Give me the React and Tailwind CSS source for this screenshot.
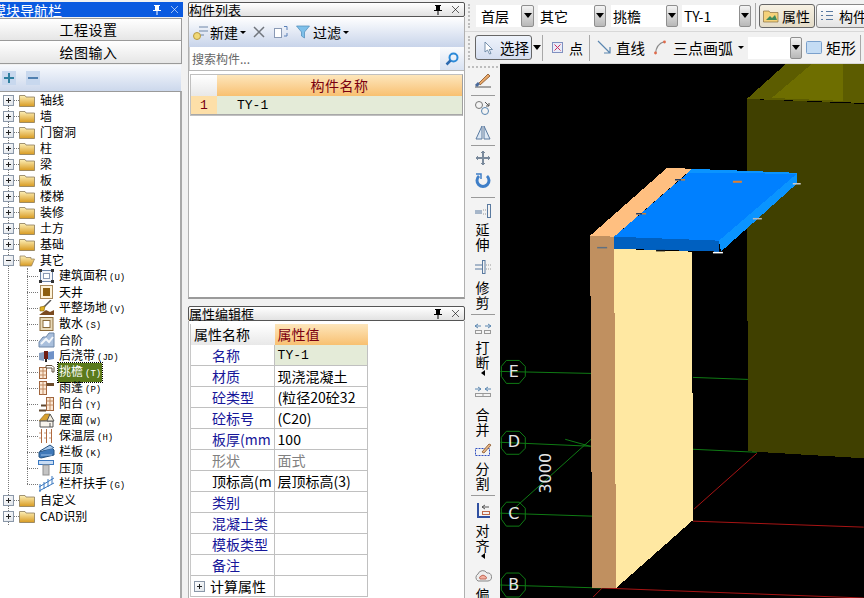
// App.jsx - 构件绘图界面
import React from 'react';

const Glyph = ({ name }) => {
    switch (name) {
        case 'area':
            return (<svg width="17" height="16" viewBox="0 0 17 16"><rect x="2.5" y="2.5" width="12" height="11" fill="#f4f6fa" stroke="#6f86a8" /><rect x="5.5" y="5.5" width="6" height="5" fill="#fff" stroke="#8a9ab5" /><rect x="1" y="1" width="3" height="3" fill="#333" /><rect x="13" y="1" width="3" height="3" fill="#333" /><rect x="1" y="12" width="3" height="3" fill="#333" /><rect x="13" y="12" width="3" height="3" fill="#333" /></svg>);
        case 'well':
            return (<svg width="17" height="16" viewBox="0 0 17 16"><rect x="2.5" y="1.5" width="12" height="13" fill="#fdf2d8" stroke="#a8895a" /><rect x="5" y="4" width="7" height="8" fill="#8c5f10" /></svg>);
        case 'site':
            return (<svg width="17" height="16" viewBox="0 0 17 16"><path d="M1 15 L8 10 L12 12 L16 10 L16 15 Z" fill="#7a4a20" /><path d="M5 8 L13 0" stroke="#555" strokeWidth="1.5" /><path d="M2 7 L7 6 L6 11 L2 11 Z" fill="#e0b020" stroke="#806010" strokeWidth="0.6" /></svg>);
        case 'apron':
            return (<svg width="17" height="16" viewBox="0 0 17 16"><rect x="2" y="1.5" width="13" height="13" fill="#e8d9b8" stroke="#8a6a3a" /><rect x="5" y="4.5" width="7" height="7" fill="#fff" stroke="#8a6a3a" /></svg>);
        case 'step':
            return (<svg width="17" height="16" viewBox="0 0 17 16"><path d="M1 10 L5 5 L8 5 L11 1 L16 1 L16 15 L1 15 Z" fill="#a9bfdc" stroke="#6f88aa" /><path d="M3 12 L8 7 L11 10 L15 5" fill="none" stroke="#f4f7fb" strokeWidth="2" /></svg>);
        case 'band':
            return (<svg width="17" height="16" viewBox="0 0 17 16"><path d="M1 5 L6 4 L6 13 L1 12 Z" fill="#8aa0c0" /><path d="M10 4 L16 3 L16 11 L10 12 Z" fill="#6f92c8" /><rect x="6" y="3" width="4" height="8" fill="#701c10" /><rect x="7" y="11" width="2" height="3" fill="#222" /></svg>);
        case 'eave':
            return (<svg width="17" height="16" viewBox="0 0 17 16"><rect x="1.5" y="3.5" width="7" height="11" fill="#fbe9d6" stroke="#a0643c" /><path d="M1.5 7 H8.5 M1.5 11 H8.5 M5 3.5 V14.5" stroke="#c08a60" /><path d="M8 1.5 H14 L16 3.5 V8 H14 V4 H8 Z" fill="#fff" stroke="#60503c" /></svg>);
        case 'canopy':
            return (<svg width="17" height="16" viewBox="0 0 17 16"><rect x="1.5" y="1.5" width="7" height="13" fill="#fbe9d6" stroke="#a0643c" /><path d="M1.5 5 H8.5 M1.5 9 H8.5 M5 1.5 V14.5" stroke="#c08a60" /><rect x="8.5" y="3" width="7.5" height="3" fill="#6a4a2a" /></svg>);
        case 'balcony':
            return (<svg width="17" height="16" viewBox="0 0 17 16"><rect x="8.5" y="1.5" width="7" height="13" fill="#fbe9d6" stroke="#a0643c" /><path d="M8.5 5 H15.5 M8.5 9 H15.5 M12 1.5 V14.5" stroke="#c08a60" /><path d="M1 14.5 H8 M3 9.5 H8" stroke="#604830" strokeWidth="2" /></svg>);
        case 'roof':
            return (<svg width="17" height="16" viewBox="0 0 17 16"><path d="M1 9 L7 2 L12 2 L12 8 Z" fill="#d8a030" stroke="#7a5a20" strokeWidth="0.6" /><path d="M2 9 H15 V15 H2 Z" fill="#f8f4ec" stroke="#555" /><path d="M12 2 L16 9 H9 Z" fill="#f4eee0" stroke="#555" /><path d="M12 11 V15" stroke="#555" /></svg>);
        case 'insul':
            return (<svg width="17" height="16" viewBox="0 0 17 16"><path d="M3.5 1 V15 M8.5 1 V15 M13.5 1 V15" stroke="#b06a40" /><path d="M1 5 H16 M1 10 H16" stroke="#c49a7c" strokeDasharray="2 3" /></svg>);
        case 'fence':
            return (<svg width="17" height="16" viewBox="0 0 17 16"><path d="M1 8 L14 4 L16 6 L16 11 L3 14 L1 13 Z" fill="#3e78b8" stroke="#23507e" /><path d="M2 7 L12 1 L16 4" fill="#a8c8ec" stroke="#23507e" /><path d="M3 11 H14" stroke="#9cc0e8" /></svg>);
        case 'coping':
            return (<svg width="17" height="16" viewBox="0 0 17 16"><rect x="0.5" y="0.5" width="15" height="4" fill="#c8dcf4" stroke="#3a78c0" /><rect x="5" y="5" width="6" height="10" fill="#c4c4c4" stroke="#909090" /></svg>);
        case 'rail':
            return (<svg width="17" height="16" viewBox="0 0 17 16"><path d="M1 11 L16 2 M1 15 L16 7 M2 8 V16 M6 6 V13 M10 3 V11 M14 0 V8" stroke="#3a78c0" fill="none" /></svg>);
        default:
            return null;
    }
};

const Expander = ({ open }) => (
    <span className="relative block w-[11px] h-[11px] border border-[#8a97a8] bg-gradient-to-br from-white to-[#dfe4ea] shrink-0">
        <span className="absolute left-[2px] top-[4px] w-[5px] h-px bg-[#222]" />
        {!open && <span className="absolute left-[4px] top-[2px] w-px h-[5px] bg-[#222]" />}
    </span>
);

const Folder = ({ open }) => (
    <svg width="16" height="13" viewBox="0 0 16 13" className="shrink-0">
        <defs>
            <linearGradient id="fold" x1="0" y1="0" x2="0" y2="1"><stop offset="0" stopColor="#fdf0b8" /><stop offset="1" stopColor="#d89a20" /></linearGradient>
        </defs>
        {open ? (
            <path d="M1 12 L1 2 H6 L7 3.5 H12 V5 H15.5 L12.5 12 Z" fill="url(#fold)" stroke="#9a8660" strokeWidth="0.8" />
        ) : (
            <path d="M0.5 12.5 V1.5 H6 L7 3 H15.5 V12.5 Z" fill="url(#fold)" stroke="#8a7a58" strokeWidth="0.8" />
        )}
    </svg>
);

const groupsTop = ['轴线', '墙', '门窗洞', '柱', '梁', '板', '楼梯', '装修', '土方', '基础'];

const children = [
    { icon: 'area', name: '建筑面积', key: '(U)' },
    { icon: 'well', name: '天井', key: '' },
    { icon: 'site', name: '平整场地', key: '(V)' },
    { icon: 'apron', name: '散水', key: '(S)' },
    { icon: 'step', name: '台阶', key: '' },
    { icon: 'band', name: '后浇带', key: '(JD)' },
    { icon: 'eave', name: '挑檐', key: '(T)', active: true },
    { icon: 'canopy', name: '雨蓬', key: '(P)' },
    { icon: 'balcony', name: '阳台', key: '(Y)' },
    { icon: 'roof', name: '屋面', key: '(W)' },
    { icon: 'insul', name: '保温层', key: '(H)' },
    { icon: 'fence', name: '栏板', key: '(K)' },
    { icon: 'coping', name: '压顶', key: '' },
    { icon: 'rail', name: '栏杆扶手', key: '(G)' },
];

const GroupRow = ({ label, open }) => (
    <div className="relative flex items-center h-4 pl-[3px]">
        <Expander open={open} />
        <span className="w-[5px] border-t border-dotted border-[#777] shrink-0" />
        <Folder open={open} />
        <span className="ml-[5px] text-[12px] leading-4 text-black">{label}</span>
    </div>
);

const ChildRow = ({ item }) => (
    <div className="flex items-center h-4 pl-[27px]">
        <span className="w-[11px] border-t border-dotted border-[#777] shrink-0" />
        <span className="w-[17px] h-4 shrink-0"><Glyph name={item.icon} /></span>
        <span className={`ml-[3px] pl-[1px] pr-[1px] text-[12px] leading-4 whitespace-nowrap ${item.active ? 'bg-[#5b7a1c] text-white outline-1 outline-dotted outline-black' : 'text-black'}`}>
            {item.name}
            {item.key && <span className="font-['Liberation_Mono',monospace] text-[9px] ml-[2px]">{item.key}</span>}
        </span>
    </div>
);

const PanelTitle = ({ title }) => (
    <div className="flex items-center h-[15px] border border-[#555] rounded-[2px] bg-gradient-to-b from-white to-[#e2e2e2]">
        <span className="text-[13px] leading-[13px] text-black flex-1">{title}</span>
        <PinClose dark />
    </div>
);

const PinClose = ({ dark }) => (
    <span className={`flex items-center gap-[9px] pr-[4px] ${dark ? 'text-black' : 'text-white'}`}>
        <svg width="8" height="10" viewBox="0 0 8 10" fill="currentColor"><path d="M1 0 H7 V1 H6 V5 H8 V6 H4.5 V10 H3.5 V6 H0 V5 H2 V1 H1 Z" /></svg>
        <svg width="9" height="9" viewBox="0 0 9 9" fill="none" stroke="currentColor" strokeOpacity="0.6"><path d="M1 1 L8 8 M8 1 L1 8" /></svg>
    </span>
);

const props = [
    { k: '名称', v: 'TY-1', mono: true, sel: true },
    { k: '材质', v: '现浇混凝土' },
    { k: '砼类型', v: '(粒径20砼32' },
    { k: '砼标号', v: '(C20)' },
    { k: '板厚(mm', v: '100' },
    { k: '形状', v: '面式', gray: true },
    { k: '顶标高(m', v: '层顶标高(3)', black: true },
    { k: '类别', v: '' },
    { k: '混凝土类', v: '' },
    { k: '模板类型', v: '' },
    { k: '备注', v: '' },
];

const Combo = ({ text, width, btn, pad }) => (
    <div className="flex items-center">
        <div className={`${width} ${pad} h-[22px] bg-white text-[14px] leading-[22px] text-black overflow-hidden whitespace-nowrap`}>{text}</div>
        <DropBtn btn={btn} />
    </div>
);

const DropBtn = ({ btn }) => (
    <div className={`${btn} h-[22px] border border-[#8f8f8f] rounded-[2px] bg-gradient-to-b from-[#f4f4f4] to-[#b8b8b8] flex items-center justify-center`}>
        <span className="w-0 h-0 border-x-[4px] border-x-transparent border-t-[5px] border-t-black" />
    </div>
);

const Sep = () => <div className="w-px h-[26px] bg-[#a8a8a8] shrink-0" />;

const Grip = () => <div className="w-[3px] h-[24px] border-l-2 border-dotted border-[#bdbdbd] shrink-0" />;

const HSep = ({ className }) => <div className={`w-[24px] h-px bg-[#9a9a9a] shrink-0 ${className}`} />;

const Tall = ({ text, className }) => (
    <div className={`flex flex-col items-center shrink-0 text-[14px] leading-[15px] text-black ${className}`}>
        {text.split('').map((c, i) => <span key={i}>{c}</span>)}
    </div>
);

const ToolIcon = ({ className, children }) => (
    <svg width="20" height="16" viewBox="0 0 20 16" className={`shrink-0 ${className}`} fill="none">{children}</svg>
);

const Scene = () => (
    <svg className="block w-full h-full" viewBox="500 63 364 535" shapeRendering="crispEdges">
        <rect x="500" y="63" width="364" height="535" fill="#000" />
        {/* 后面的墙 */}
        <polygon points="786,63 747,98 864,102 864,63" fill="#5c5c00" />
        <polygon points="812,63 772,97 843,100 843,63" fill="#6e6e00" />
        <polygon points="747,98 864,103 864,458 748,451" fill="#404000" />

        {/* 轴线 */}
        <g stroke="#0f7a14" strokeWidth="1" fill="none" shapeRendering="auto">
            <path d="M500 371 L591 373 M693 377 L748 379" />
            <path d="M500 442 L592 446 M693 449 L757 452" />
            <path d="M500 513 L592 516" />
            <path d="M500 585 L602 588" />
            <path d="M513 509 L592 438 M565 439 L590 446" />
            <polygon points="506,360 519,360 525,366 525,376 519,383 506,383 501,376 501,366" />
            <polygon points="506,431 519,431 525,437 525,448 519,454 506,454 501,448 501,437" />
            <polygon points="506,502 519,502 525,508 525,519 519,526 506,526 501,519 501,508" />
            <polygon points="506,573 519,573 525,579 525,590 519,597 506,597 501,590 501,579" />
        </g>
        <g stroke="#a81414" strokeWidth="1" fill="none" shapeRendering="auto">
            <path d="M693 521 L864 527" />
            <path d="M694 509 L757 453" />
            <path d="M602 588 L864 598" />
            <path d="M602 588 L593 597" />
        </g>

        {/* 墙体 */}
        <polygon points="590,235 614,236 616,588 592,588" fill="#c09060" />
        <polygon points="614,248 692,251 693,520 616,588" fill="#ffe8a2" />
        <polygon points="590,235 667,167 692,168 614,236" fill="#ffbf80" />

        {/* 挑檐板 */}
        <polygon points="692,168 797,172 797,174 688,172" fill="#0a94ff" />
        <polygon points="614,236 688,172 797,173 719,240" fill="#0080ff" />
        <polygon points="614,236 719,240 719,251 614,248" fill="#0060c0" />
        <polygon points="719,240 797,173 797,183 721,251" fill="#0a94ff" />

        {/* 小标记 */}
        <g shapeRendering="auto">
            <path d="M675 179 H681" stroke="#203a60" strokeWidth="1.5" />
            <path d="M681 179 H685" stroke="#d08030" strokeWidth="1.5" />
            <path d="M733 181 H742" stroke="#e08030" strokeWidth="2" />
            <path d="M636 213 H642" stroke="#203a60" strokeWidth="1.5" />
            <path d="M642 213 H646" stroke="#d08030" strokeWidth="1.5" />
            <path d="M793 183 H801" stroke="#c8c8c8" strokeWidth="1.5" />
            <path d="M753 218 H762" stroke="#b8b8b8" strokeWidth="1.5" />
            <path d="M656 250 H665" stroke="#111" strokeWidth="1.5" />
            <path d="M713 252 H723" stroke="#fff" strokeWidth="1.5" />
            <path d="M597 247 H607" stroke="#607080" strokeWidth="1.5" />
        </g>

        {/* 轴号 */}
        <g fill="#e6e6e6" fontFamily="'DejaVu Sans', sans-serif" fontSize="16" textAnchor="middle" shapeRendering="auto">
            <text x="513.5" y="377">E</text>
            <text x="513.5" y="447">D</text>
            <text x="513.5" y="519">C</text>
            <text x="513.5" y="590">B</text>
            <text transform="translate(551 473) rotate(-90)" fontSize="16">3000</text>
        </g>
    </svg>
);

const App = () => {
    return (
        <div className="w-[864px] h-[598px] flex overflow-hidden bg-[#f1f1f1] font-['Noto_Sans_CJK_SC','Liberation_Sans',sans-serif]">
            {/* 模块导航栏 */}
            <div className="w-[183px] shrink-0 flex flex-col pt-[2px]">
                <div className="flex items-center h-[15px] bg-[#0a5ae0]">
                    <span className="ml-[-8px] flex-1 text-[14px] leading-[14px] text-white whitespace-nowrap">模块导航栏</span>
                    <PinClose />
                </div>
                <div className="mt-px w-[182px] h-[23px] pr-[4px] border border-[#9a9a9a] border-l-0 bg-gradient-to-b from-white to-[#e6e6e6] text-center text-[14px] leading-[21px] tracking-[0.5px] text-black">工程设置</div>
                <div className="w-[182px] h-[23px] pr-[4px] border border-t-0 border-[#9a9a9a] border-l-0 bg-gradient-to-b from-white to-[#e6e6e6] text-center text-[14px] leading-[22px] tracking-[0.5px] text-black">绘图输入</div>
                <div className="w-[181px] mt-[1px] h-[26px] flex items-center gap-[10px] pl-[2px] bg-gradient-to-b from-[#f7f9fd] to-[#ccd8ec]">
                    <span className="relative w-[14px] h-[14px] bg-[#c8d8ee]">
                        <span className="absolute left-[2px] top-[6px] w-[10px] h-[2px] bg-[#2f7f9f]" />
                        <span className="absolute left-[6px] top-[2px] w-[2px] h-[10px] bg-[#2f7f9f]" />
                    </span>
                    <span className="relative w-[14px] h-[14px] bg-[#c8d8ee]">
                        <span className="absolute left-[2px] top-[6px] w-[10px] h-[2px] bg-[#4f7fb0]" />
                    </span>
                </div>
                <div className="relative w-[182px] flex-1 bg-white border-t border-[#9a9a9a] border-r-2 border-r-[#a8a8a8]">
                    <div className="absolute left-[8px] top-[7px] h-[426px] border-l border-dotted border-[#777]" />
                    <div className="absolute left-[27px] top-[176px] h-[216px] border-l border-dotted border-[#777]" />
                    {groupsTop.map((label) => <GroupRow key={label} label={label} />)}
                    <GroupRow label="其它" open />
                    {children.map((item) => <ChildRow key={item.name} item={item} />)}
                    <GroupRow label="自定义" />
                    <GroupRow label="CAD识别" />
                </div>
            </div>

            {/* 中间面板 */}
            <div className="w-[277px] ml-[5px] shrink-0 flex flex-col pt-[2px]">
                <PanelTitle title="构件列表" />
                <div className="flex-1 flex flex-col border-x border-[#b0b0b0] border-b-2 border-b-[#9a9a9a] bg-white">
                    <div className="h-[30px] flex items-center pl-[3px] bg-gradient-to-b from-white to-[#c8d4ea]">
                        <svg width="17" height="16" viewBox="0 0 17 16" fill="none"><path d="M7 3 H16 M7 7 H16 M7 11 H12" stroke="#6f86a8" /><circle cx="5" cy="12" r="3.5" fill="#f0d878" stroke="#b89a40" /></svg>
                        <span className="ml-[1px] text-[14px] text-black">新建</span>
                        <span className="ml-[2px] w-0 h-0 border-x-[3px] border-x-transparent border-t-[3px] border-t-black" />
                        <svg className="ml-[6px]" width="14" height="14" viewBox="0 0 14 14" fill="none" stroke="#70757c" strokeWidth="1.5"><path d="M2 2 L12 12 M12 2 L2 12" /></svg>
                        <svg className="ml-[7px]" width="18" height="14" viewBox="0 0 18 14" fill="none"><rect x="1.5" y="3.5" width="7" height="9" fill="#fff" stroke="#8a9ab5" /><path d="M11 1.5 H14 V5 M14 8 V11 H11" stroke="#5a80b8" /></svg>
                        <svg className="ml-[5px]" width="14" height="14" viewBox="0 0 14 14"><path d="M0.5 1 H13.5 L8.5 7 V13 L5.5 11 V7 Z" fill="#7ec0ea" stroke="#4a8ab8" strokeWidth="0.7" /></svg>
                        <span className="ml-[3px] text-[14px] text-black">过滤</span>
                        <span className="ml-[2px] w-0 h-0 border-x-[3px] border-x-transparent border-t-[3px] border-t-black" />
                    </div>
                    <div className="h-[24px] flex border-b border-[#b8b8b8]">
                        <div className="flex-1 pl-[2px] text-[12px] leading-[23px] text-[#666] border-l border-[#d0d0d0]">搜索构件...</div>
                        <div className="w-[24px] flex items-center justify-center bg-gradient-to-b from-[#fafbfd] to-[#d8e2f2]">
                            <svg width="14" height="14" viewBox="0 0 14 14" fill="none"><circle cx="8.5" cy="5.5" r="4" stroke="#2c8ad8" strokeWidth="2" /><path d="M5.5 8.5 L1.5 12.5" stroke="#2c6ab0" strokeWidth="2.5" /></svg>
                        </div>
                    </div>
                    <div className="mt-[3px] mx-[1px] border border-[#c0c0c0] border-r-[#a0a0a0]">
                        <div className="flex h-[21px]">
                            <div className="w-[26px] bg-gradient-to-b from-white to-[#e8e8e8]" />
                            <div className="flex-1 bg-gradient-to-b from-[#fde6bb] to-[#f8c070] text-center text-[14px] leading-[21px] tracking-[0.5px] text-[#7a0010]">构件名称</div>
                        </div>
                        <div className="flex h-[19px] border-b border-[#a8a8a8]">
                            <div className="w-[26px] pl-[9px] pt-[1px] bg-[#fddfa8] text-[13px] leading-[18px] text-[#7a0010] font-['Liberation_Mono',monospace]">1</div>
                            <div className="flex-1 pl-[20px] pt-[1px] bg-[#e4ebd8] text-[13px] leading-[18px] text-black font-['Liberation_Mono',monospace]">TY-1</div>
                        </div>
                    </div>
                </div>
                <div className="h-[7px] shrink-0" />
                <PanelTitle title="属性编辑框" />
                <div className="h-[277px] shrink-0 border-x border-[#b0b0b0] bg-white pl-[1px] pt-[3px] overflow-hidden">
                    <div className="w-[178px] border-l border-[#c8c8c8]">
                        <div className="flex h-[21px]">
                            <div className="w-[84px] pl-[3px] bg-gradient-to-b from-white to-[#e8e8e8] text-[14px] leading-[21px] text-black">属性名称</div>
                            <div className="w-[94px] pl-[3px] bg-gradient-to-b from-[#fde6bb] to-[#f8c070] text-[14px] leading-[21px] text-[#7a0010]">属性值</div>
                        </div>
                        {props.map((p) => (
                            <div key={p.k} className="flex h-[21px] border-b border-[#c0c0c0]">
                                <div className={`w-[84px] pl-[21px] text-[14px] leading-[20px] whitespace-nowrap overflow-hidden border-r border-[#c0c0c0] ${p.gray ? 'text-[#808080]' : p.black ? 'text-black' : 'text-[#16169a]'}`}>{p.k}</div>
                                <div className={`w-[94px] pl-[3px] whitespace-nowrap overflow-hidden border-r border-[#c0c0c0] ${p.mono ? "font-['Liberation_Mono',monospace] text-[13px] pt-[2px] leading-[18px]" : 'text-[14px] leading-[20px]'} ${p.sel ? 'bg-[#e4ebd8]' : ''} ${p.gray ? 'text-[#808080]' : 'text-black'}`}>{p.v}</div>
                            </div>
                        ))}
                        <div className="flex h-[21px] border-b border-[#c0c0c0]">
                            <div className="w-[84px] pl-[3px] flex items-center gap-[5px] text-[14px] leading-[20px] border-r border-[#c0c0c0] text-black whitespace-nowrap overflow-hidden">
                                <Expander />
                                计算属性
                            </div>
                            <div className="w-[94px] border-r border-[#c0c0c0]" />
                        </div>
                    </div>
                </div>
            </div>

            {/* 绘图区 */}
            <div className="w-[399px] shrink-0 flex flex-col">
                <div className="h-[32px] shrink-0 flex items-center pl-[3px] border-b border-[#d8d8d8]">
                    <Grip />
                    <div className="ml-[5px]"><Combo text="首层" width="w-[45px]" pad="pl-[5px]" btn="w-[13px]" /></div>
                    <div className="ml-[4px]"><Combo text="其它" width="w-[56px]" pad="pl-[2px]" btn="w-[12px]" /></div>
                    <div className="ml-[5px]"><Combo text="挑檐" width="w-[55px]" pad="pl-[2px]" btn="w-[12px]" /></div>
                    <div className="ml-[4px]"><Combo text="TY-1" width="w-[57px]" pad="pl-[2px]" btn="w-[12px]" /></div>
                    <div className="ml-[4px]"><Sep /></div>
                    <div className="ml-[3px] w-[56px] h-[24px] flex items-center gap-[3px] pl-[3px] border border-[#666] rounded-[3px] bg-gradient-to-b from-[#f7f1e3] to-[#e4dcc8] shrink-0">
                        <svg width="16" height="14" viewBox="0 0 16 14"><path d="M0.5 2 H6 L7 3.5 H15 V13 H0.5 Z" fill="#f5d27a" stroke="#8a7040" strokeWidth="0.7" /><path d="M3 11 L7 7 L9 9 L12 6 L14 11 Z" fill="#3f8a5a" /></svg>
                        <span className="text-[14px] leading-[22px] text-black">属性</span>
                    </div>
                    <div className="ml-[1px] h-[24px] flex items-center gap-[5px] pl-[3px] border border-[#888] rounded-[3px] bg-gradient-to-b from-white to-[#e4e4e4] whitespace-nowrap shrink-0">
                        <svg width="14" height="14" viewBox="0 0 14 14" fill="none" stroke="#5a7aa0"><path d="M1 2.5 H3 M1 6.5 H3 M1 10.5 H3 M6 2.5 H13 M6 6.5 H13 M6 10.5 H13" /></svg>
                        <span className="text-[14px] leading-[22px] text-black">构件</span>
                    </div>
                </div>
                <div className="h-[31px] shrink-0 flex items-center pl-[3px]">
                    <Grip />
                    <div className="ml-[4px] w-[57px] h-[25px] flex items-center pl-[8px] gap-[6px] border border-[#666] rounded-[3px] bg-gradient-to-b from-[#eef3fb] to-[#d5def0] shrink-0">
                        <svg width="10" height="14" viewBox="0 0 10 14"><path d="M1 1 V11 L3.5 9 L5.5 13 L7 12.5 L5.2 8.5 H8.5 Z" fill="#fff" stroke="#5a7a9a" strokeWidth="0.8" /></svg>
                        <span className="text-[14.5px] leading-[22px] text-black whitespace-nowrap">选择</span>
                    </div>
                    <span className="ml-[1px] w-0 h-0 border-x-[4px] border-x-transparent border-t-[5px] border-t-black" />
                    <div className="ml-[1px]"><Sep /></div>
                    <svg className="ml-[9px]" width="11" height="11" viewBox="0 0 11 11" fill="none"><rect x="0.5" y="0.5" width="10" height="10" fill="#e8ecf8" stroke="#8090c0" /><path d="M2.5 2.5 L8.5 8.5 M8.5 2.5 L2.5 8.5" stroke="#d03060" /></svg>
                    <span className="ml-[6px] text-[14px] leading-[22px] text-black">点</span>
                    <div className="ml-[6px]"><Sep /></div>
                    <svg className="ml-[7px]" width="15" height="15" viewBox="0 0 15 15" fill="none"><path d="M1 1 L13 13 M13 7 V13 H7" stroke="#5a86b0" strokeWidth="1.2" /></svg>
                    <span className="ml-[4px] text-[14.5px] leading-[22px] text-black whitespace-nowrap">直线</span>
                    <svg className="ml-[9px]" width="12" height="15" viewBox="0 0 12 15" fill="none"><path d="M1.5 14 Q2 4 10.5 1.5" stroke="#8a8a8a" strokeWidth="1.2" /><circle cx="1.5" cy="13" r="1.4" fill="#e06a4a" /><circle cx="10.5" cy="2" r="1.4" fill="#e06a4a" /></svg>
                    <span className="ml-[7px] text-[15px] leading-[22px] text-black whitespace-nowrap">三点画弧</span>
                    <span className="ml-[5px] w-0 h-0 border-x-[3px] border-x-transparent border-t-[3px] border-t-black" />
                    <div className="ml-[4px] w-[42px] h-[22px] bg-white shrink-0" />
                    <DropBtn btn="w-[12px]" />
                    <svg className="ml-[4px]" width="16" height="13" viewBox="0 0 16 13"><rect x="0.5" y="0.5" width="15" height="12" rx="1" fill="#c4dcf4" stroke="#7aa0cc" /></svg>
                    <span className="ml-[4px] text-[15px] leading-[22px] text-black whitespace-nowrap">矩形</span>
                    <div className="ml-[4px]"><Sep /></div>
                </div>
                <div className="flex-1 min-h-0 flex">
                    <div className="w-[35px] shrink-0 flex flex-col items-center bg-[#f3f3f3] overflow-hidden">
                        <div className="w-[30px] h-[6px] shrink-0 border-t-2 border-dotted border-[#bdbdbd] mt-[3px]" />
                        <ToolIcon><path d="M4 13 L15 2 L17 4 L7 13" fill="#e8a86a" stroke="#9a6a40" /><path d="M2 15 H18" stroke="#555" /><path d="M6 11 L3 14" stroke="#4a6a9a" strokeWidth="3" /></ToolIcon>
                        <HSep className="mt-[7px]" />
                        <ToolIcon className="mt-[4px]"><circle cx="6" cy="5" r="3.5" stroke="#777" /><circle cx="12" cy="11" r="3.5" stroke="#5a86b0" /><path d="M12 2 L16 6 M16 3 V6 H13" stroke="#555" /></ToolIcon>
                        <ToolIcon className="mt-[8px]"><path d="M9 2 V15 H3 Z M11 2 V15 H17 Z" stroke="#5a7aa0" fill="#dde8f4" /></ToolIcon>
                        <HSep className="mt-[5px]" />
                        <ToolIcon className="mt-[4px]"><path d="M10 2 V14 M4 8 H16" stroke="#7a8a9c" strokeWidth="2" /><path d="M8 3 L10 1 L12 3 M8 13 L10 15 L12 13 M5 6 L3 8 L5 10 M15 6 L17 8 L15 10" stroke="#7a8a9c" /></ToolIcon>
                        <ToolIcon className="mt-[7px]"><path d="M6 3 A6 6 0 1 0 14 3" stroke="#3f7fc8" strokeWidth="3" /><path d="M3 1 L8 1 L8 6" stroke="#3f7fc8" strokeWidth="1.5" /></ToolIcon>
                        <HSep className="mt-[8px]" />
                        <ToolIcon className="mt-[5px]"><path d="M2 8 H9 M2 10 H9" stroke="#5a7aa0" /><path d="M10 7 H13 M10 11 H13" stroke="#999" strokeDasharray="1 1" /><rect x="14.5" y="1.5" width="3" height="13" stroke="#5a7aa0" /></ToolIcon>
                        <Tall text="延伸" className="mt-[3px]" />
                        <ToolIcon className="mt-[7px]"><path d="M2 6 H9 M2 10 H9" stroke="#5a7aa0" /><rect x="9.5" y="1.5" width="2.5" height="13" stroke="#5a7aa0" /><path d="M13 6 H18 M13 10 H18" stroke="#999" strokeDasharray="1 1" /></ToolIcon>
                        <Tall text="修剪" className="mt-[5px]" />
                        <HSep className="mt-[4px]" />
                        <ToolIcon className="mt-[6px]"><path d="M2 5 H8 M12 5 H18 M5 3 L2 5 L5 7 M15 3 L18 5 L15 7" stroke="#5a86b0" /><rect x="2.5" y="9.5" width="6" height="3" stroke="#999" /><rect x="11.5" y="9.5" width="6" height="3" stroke="#999" /></ToolIcon>
                        <Tall text="打断" className="mt-[3px]" />
                        <span className="w-0 h-0 shrink-0 border-y-[3px] border-y-transparent border-r-[4px] border-r-black" />
                        <ToolIcon className="mt-[8px]"><path d="M2 5 H8 M12 5 H18 M5 3 L8 5 L5 7 M15 3 L12 5 L15 7" stroke="#5a86b0" /><rect x="2.5" y="9.5" width="15" height="3" stroke="#999" /><path d="M10 9 V13" stroke="#999" /></ToolIcon>
                        <Tall text="合并" className="mt-[7px]" />
                        <ToolIcon className="mt-[5px]"><rect x="2.5" y="6.5" width="14" height="7" stroke="#3050c0" strokeDasharray="2 1" /><path d="M9 10 L16 2 L18 3 L11 11 Z" fill="#e8b888" stroke="#9a6a40" /></ToolIcon>
                        <Tall text="分割" className="mt-[3px]" />
                        <HSep className="mt-[4px]" />
                        <ToolIcon className="mt-[6px]"><path d="M5 1 V15 H17" stroke="#3050a0" strokeWidth="2" /><path d="M9 5 H16 M12 3 L9 5 L12 7" stroke="#555" /><rect x="9.5" y="9.5" width="7" height="3" stroke="#c06a4a" /></ToolIcon>
                        <Tall text="对齐" className="mt-[5px]" />
                        <span className="w-0 h-0 shrink-0 border-y-[3px] border-y-transparent border-r-[4px] border-r-black" />
                        <ToolIcon className="mt-[9px]"><path d="M5 13 A4 4 0 0 1 5 6 A5 5 0 0 1 14 5 A4 4 0 0 1 15 13 Z" fill="#eee" stroke="#888" /><path d="M7 11 A2 2 0 0 1 8 8 A3 3 0 0 1 12 8 A2 2 0 0 1 13 11 Z" fill="#f4b0a0" stroke="#c06a5a" /></ToolIcon>
                        <Tall text="偏" className="mt-[3px]" />
                    </div>
                    <div className="flex-1 min-w-0 bg-black border-t border-[#d8d8d8]">
                        <Scene />
                    </div>
                </div>
            </div>
        </div>
    );
};

export default App;
